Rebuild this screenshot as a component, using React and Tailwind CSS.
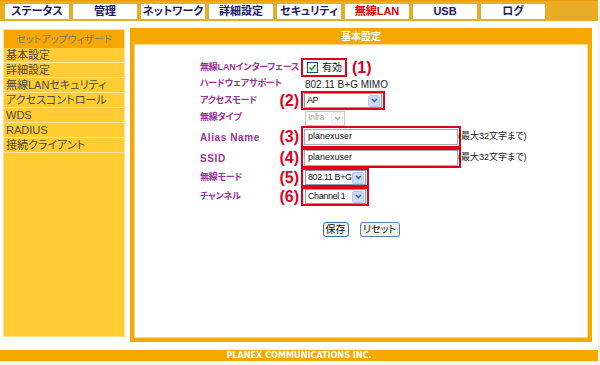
const jp = "font-['Liberation_Sans','Noto_Sans_CJK_JP',sans-serif] [font-feature-settings:'palt']";

const tabs = ["ステータス", "管理", "ネットワーク", "詳細設定", "セキュリティ", "無線LAN", "USB", "ログ"];
const menu = ["基本設定", "詳細設定", "無線LANセキュリティ", "アクセスコントロール", "WDS", "RADIUS", "接続クライアント"];

function Chevron() {
  return (
    <svg width="7" height="5" viewBox="0 0 7 5">
      <path d="M1 1 L3.5 3.5 L6 1" fill="none" stroke="#4d6185" strokeWidth="1.4" />
    </svg>
  );
}

function Select({ value, width, disabled }) {
  return (
    <div
      className={`flex h-[15px] shrink-0 items-center justify-between border bg-white pl-[2px] pr-[1px] text-[9px] tracking-[-0.4px] whitespace-nowrap ${
        disabled ? "border-[#c9c7ba] text-[#a8a8a8]" : "border-[#7f9db9] text-[#111]"
      }`}
      style={{ width }}
    >
      <span className="overflow-hidden">{value}</span>
      <span
        className={`flex h-[12px] w-[12px] shrink-0 items-center justify-center rounded-[2px] border ${
          disabled ? "border-[#dcdcd4] bg-[#f2f2ee] opacity-50" : "border-[#b4c8f0] bg-[#c9d9f9]"
        }`}
      >
        <Chevron />
      </span>
    </div>
  );
}

function Num({ n }) {
  return <span className="text-[16px] font-bold leading-none whitespace-nowrap text-[#e0001b]">({n})</span>;
}

function Row({ label, n, h, en, children }) {
  return (
    <div className="flex items-center whitespace-nowrap" style={{ height: h }}>
      <div className="flex w-[101px] shrink-0 items-center justify-between pr-[2px]">
        <span
          className={`font-bold text-[#993399] ${en ? "text-[10px] tracking-[0.6px]" : "text-[9px] tracking-[-0.2px]"}`}
        >
          {label}
        </span>
        {n && <Num n={n} />}
      </div>
      {children}
    </div>
  );
}

function TextBox() {
  return (
    <div className="flex h-[16px] w-[154px] shrink-0 items-center border border-[#a5acb2] pl-[3px] text-[9px] text-[#111]">
      planexuser
    </div>
  );
}

export default function App() {
  return (
    <div className={`h-[365px] w-[600px] overflow-hidden bg-[#f5f5ee] ${jp}`}>
      <div className="w-[598px] bg-white">
        {/* top tabs */}
        <div className="flex h-[21px] gap-[4px] border-t border-[#f09a00] bg-[#e8ac26] pl-[5px] pt-[3px]">
          {tabs.map((t) => (
            <div
              key={t}
              className={`flex h-[15px] w-[64px] items-center justify-center bg-white text-[11px] font-bold ${
                t === "無線LAN" ? "text-[#e00000]" : "text-[#1a1a5e]"
              }`}
            >
              {t}
            </div>
          ))}
        </div>

        <div className="flex h-[329px] pl-[3px] pt-[7px]">
          {/* sidebar */}
          <div className="mt-[1px] flex h-[308px] w-[122px] flex-col border border-[#ffe08c] bg-[#ffcc33]">
            <div className="flex h-[18px] items-center justify-center bg-[#f7a800] text-[10px] text-[#777]">
              セットアップウィザード
            </div>
            {menu.map((m) => (
              <div
                key={m}
                className="flex h-[15px] items-center border-b border-[#ffe59a] pl-[2px] text-[11px] text-[#4a4a4a]"
              >
                {m}
              </div>
            ))}
          </div>

          {/* main panel */}
          <div className="ml-[5px] flex h-[314px] w-[462px] flex-col bg-[#f7a800] px-[4px] pb-[4px]">
            <div className="flex h-[16px] items-center justify-center text-[10px] font-bold text-white">基本設定</div>
            <div className="flex flex-1 flex-col border border-[#ffd98a] bg-white pl-[65px] pt-[13px]">
              <Row label="無線LANインターフェース" h={19}>
                <div className="flex h-[19px] w-[46px] shrink-0 items-center border-2 border-[#e0001b] pl-[4px]">
                  <svg width="11" height="11" viewBox="0 0 11 11">
                    <rect x="0.5" y="0.5" width="10" height="10" fill="#f4f4ef" stroke="#1c5180" />
                    <path d="M2.5 5.5 L4.5 7.5 L8.5 3" fill="none" stroke="#21a121" strokeWidth="1.6" />
                  </svg>
                  <span className="ml-[4px] text-[10px] text-[#111]">有効</span>
                </div>
                <span className="ml-[5px]">
                  <Num n={1} />
                </span>
              </Row>
              <Row label="ハードウェアサポート" h={14}>
                <span className="pl-[4px] text-[10px] text-[#222]">802.11 B+G MIMO</span>
              </Row>
              <Row label="アクセスモード" n={2} h={19}>
                <div className="flex h-[19px] w-[84px] shrink-0 items-center border-2 border-[#e0001b] pl-[1px]">
                  <Select value="AP" width={78} />
                </div>
              </Row>
              <Row label="無線タイプ" h={16}>
                <div className="pl-[4px]">
                  <Select value="Infra" width={40} disabled />
                </div>
              </Row>
              <Row label="Alias Name" n={3} h={22} en>
                <div className="flex h-[22px] w-[160px] shrink-0 items-center border-2 border-[#e0001b] pl-[1px]">
                  <TextBox />
                </div>
                <span className="-ml-[3px] text-[9px] text-[#222]">(最大32文字まで)</span>
              </Row>
              <Row label="SSID" n={4} h={20} en>
                <div className="flex h-[20px] w-[160px] shrink-0 items-center border-2 border-[#e0001b] pl-[1px]">
                  <TextBox />
                </div>
                <span className="-ml-[3px] text-[9px] text-[#222]">(最大32文字まで)</span>
              </Row>
              <Row label="無線モード" n={5} h={19}>
                <div className="flex h-[19px] w-[68px] shrink-0 items-center border-2 border-[#e0001b] pl-[2px]">
                  <Select value="802.11 B+G" width={61} />
                </div>
              </Row>
              <Row label="チャンネル" n={6} h={19}>
                <div className="flex h-[19px] w-[68px] shrink-0 items-center border-2 border-[#e0001b] pl-[2px]">
                  <Select value="Channel 1" width={61} />
                </div>
              </Row>

              <div className="mt-[16px] flex justify-center gap-[11px] pr-[65px]">
                <button className="h-[15px] w-[26px] rounded-[3px] border border-[#3c6cb8] bg-[#f1f1ec] text-[10px] leading-none text-[#111]">
                  保存
                </button>
                <button className="h-[15px] w-[40px] rounded-[3px] border border-[#5a7eb8] bg-[#f1f1ec] text-[10px] leading-none text-[#111]">
                  リセット
                </button>
              </div>
            </div>
          </div>
        </div>
      </div>

      {/* footer */}
      <div className="flex h-[11px] w-[598px] items-center justify-center bg-[#f7a800] font-['DejaVu_Sans_Condensed','Liberation_Sans',sans-serif] text-[9px] font-bold text-white">
        PLANEX COMMUNICATIONS INC.
      </div>
    </div>
  );
}
